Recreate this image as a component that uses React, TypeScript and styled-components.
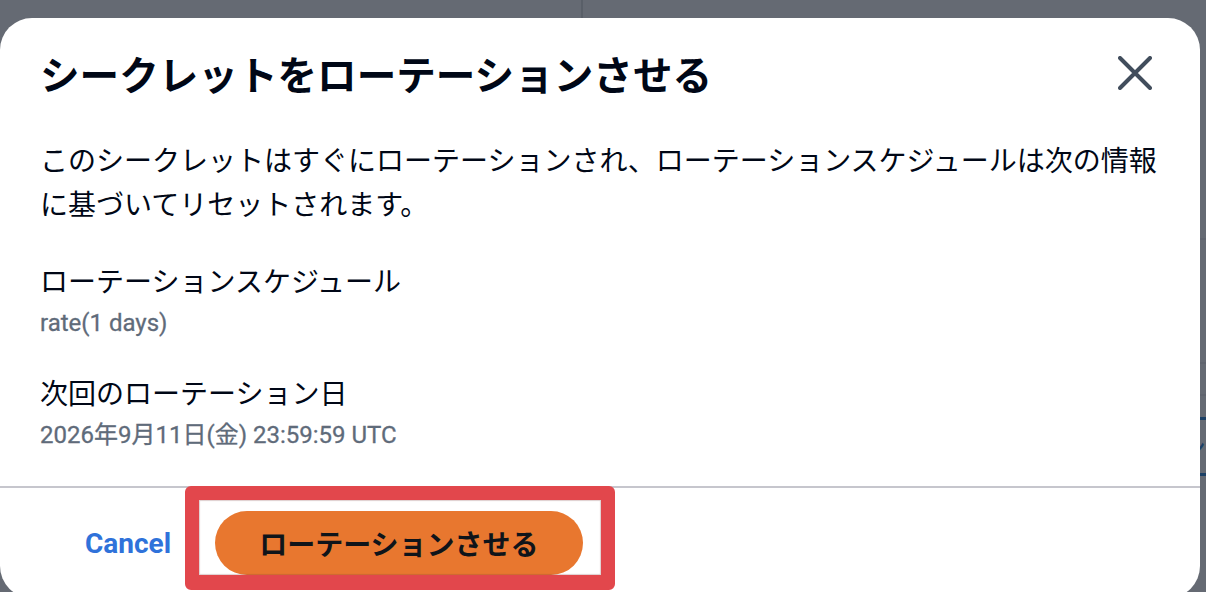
import React from "react";
import styled, { createGlobalStyle } from "styled-components";

const GlobalStyle = createGlobalStyle`
  html, body {
    margin: 0;
    padding: 0;
    width: 1206px;
    height: 592px;
    overflow: hidden;
    background: #ffffff;
  }
  * { box-sizing: border-box; }
  body {
    font-family: "Noto Sans CJK JP", "Noto Sans", sans-serif;
    color: #000716;
  }
`;

const Page = styled.div`
  position: relative;
  width: 1206px;
  height: 592px;
  display: grid;
  grid-template-columns: 583px 1fr;
  grid-template-rows: 18px 1fr;
  background: #ffffff;
`;

const TopCell = styled.div<{ $divider?: boolean }>`
  border-right: ${(p) => (p.$divider ? "2px solid #d5dbdb" : "none")};
`;

const SideRows = styled.div`
  grid-column: 2;
  display: flex;
  flex-direction: column;
`;

const PageRow = styled.div<{ $h: number; $line: string; $w?: number }>`
  height: ${(p) => p.$h}px;
  border-bottom: ${(p) => p.$w ?? 2}px solid ${(p) => p.$line};
  display: flex;
  align-items: center;
  justify-content: flex-end;
  font-size: 28px;
  color: #0972d3;
`;

const Overlay = styled.div`
  position: absolute;
  inset: 0;
  background: rgba(35, 43, 55, 0.7);
  padding-top: 18px;
`;

const Modal = styled.div`
  width: 1200px;
  height: 580px;
  background: #ffffff;
  border-radius: 32px;
  display: flex;
  flex-direction: column;
`;

const Header = styled.div`
  display: flex;
  align-items: center;
  justify-content: space-between;
  padding: 33px 48px 0 40px;
`;

const Title = styled.h2`
  margin: 0;
  font-size: 39.6px;
  line-height: 44px;
  font-weight: 700;
  color: #000716;
`;

const CloseButton = styled.button`
  border: none;
  background: none;
  padding: 0;
  width: 34px;
  height: 34px;
  display: flex;
  align-items: center;
  justify-content: center;
  color: #414d5c;
  cursor: pointer;
`;

const Body = styled.div`
  padding: 42px 36px 0 40px;
  display: flex;
  flex-direction: column;
`;

const Paragraph = styled.p`
  margin: 0;
  font-size: 28px;
  line-height: 44px;
  font-weight: 400;
`;

const Field = styled.div<{ $top: number }>`
  margin-top: ${(p) => p.$top}px;
  display: flex;
  flex-direction: column;
  gap: 5px;
`;

const FieldLabel = styled.div`
  font-size: 28px;
  line-height: 44px;
  font-weight: 400;
  color: #000716;
`;

const FieldValue = styled.div`
  font-family: Roboto, "Noto Sans CJK JP", sans-serif;
  font-size: 24px;
  line-height: 32px;
  font-weight: 400;
  color: #5f6b7a;
  -webkit-text-stroke: 0.3px #5f6b7a;
`;

const Footer = styled.div`
  margin-top: 35px;
  border-top: 2px solid #c6c6cd;
  padding: 23px 40px 0 40px;
  display: flex;
  align-items: center;
`;

const LinkButton = styled.button`
  border: none;
  background: none;
  padding: 0 44px 0 45px;
  height: 64px;
  font-family: Roboto, "Noto Sans", sans-serif;
  font-weight: 700;
  font-size: 28px;
  color: #2f72da;
  cursor: pointer;
`;

const Highlight = styled.div`
  position: relative;
`;

const PrimaryButton = styled.button`
  border: none;
  height: 64px;
  padding: 0 44px;
  border-radius: 32px;
  background: #e8772f;
  font-family: "Noto Sans CJK JP", sans-serif;
  font-weight: 700;
  font-size: 28px;
  color: #0f141a;
  cursor: pointer;
`;

const AnnotationFrame = styled.div`
  position: absolute;
  top: -25px;
  left: -30px;
  right: -32px;
  bottom: -15px;
  border: 14px solid #e2474c;
  border-bottom-width: 15px;
  border-radius: 6px;
  box-shadow: inset 0 0 1px 1px rgba(120, 60, 60, 0.25);
  pointer-events: none;
`;

export default function App() {
  return (
    <>
      <GlobalStyle />
      <Page>
        <TopCell $divider />
        <TopCell />
        <SideRows>
          <PageRow $h={222} $line="#e9ebed" />
          <PageRow $h={124} $line="#e9ebed" />
          <PageRow $h={32} $line="#e9ebed" />
          <PageRow $h={24} $line="#0972d3" $w={3} />
          <PageRow $h={56} $line="#0972d3" $w={3}>
            ン
          </PageRow>
        </SideRows>
        <Overlay>
          <Modal role="dialog" aria-modal="true">
            <Header>
              <Title>シークレットをローテーションさせる</Title>
              <CloseButton aria-label="閉じる">
                <svg width="34" height="34" viewBox="0 0 34 34" fill="none">
                  <path
                    d="M2 2 L32 32 M32 2 L2 32"
                    stroke="currentColor"
                    strokeWidth="4"
                    strokeLinecap="round"
                  />
                </svg>
              </CloseButton>
            </Header>
            <Body>
              <Paragraph>
                このシークレットはすぐにローテーションされ、ローテーションスケジュールは次の情報に基づいてリセットされます。
              </Paragraph>
              <Field $top={33}>
                <FieldLabel>ローテーションスケジュール</FieldLabel>
                <FieldValue>rate(1 days)</FieldValue>
              </Field>
              <Field $top={31}>
                <FieldLabel>次回のローテーション日</FieldLabel>
                <FieldValue>2026年9月11日(金) 23:59:59 UTC</FieldValue>
              </Field>
            </Body>
            <Footer>
              <LinkButton>Cancel</LinkButton>
              <Highlight>
                <PrimaryButton>ローテーションさせる</PrimaryButton>
                <AnnotationFrame />
              </Highlight>
            </Footer>
          </Modal>
        </Overlay>
      </Page>
    </>
  );
}
